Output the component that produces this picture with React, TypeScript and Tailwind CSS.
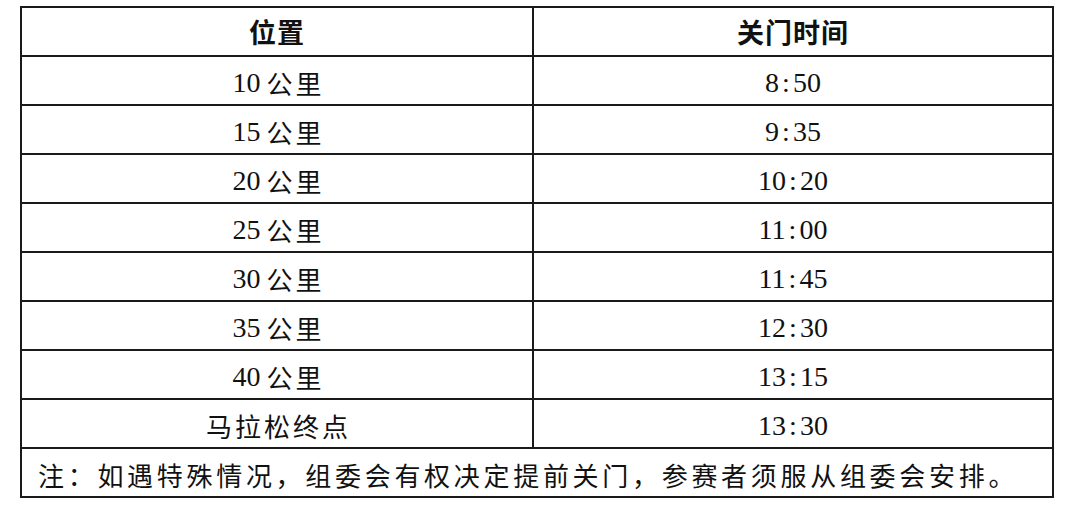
const rows = [
  { place: "10", time: "8:50" },
  { place: "15", time: "9:35" },
  { place: "20", time: "10:20" },
  { place: "25", time: "11:00" },
  { place: "30", time: "11:45" },
  { place: "35", time: "12:30" },
  { place: "40", time: "13:15" },
  { place: null, time: "13:30" },
];

const Time = ({ value }: { value: string }) => {
  const [h, m] = value.split(":");
  return (
    <span className="text-[28px] leading-none" style={{ fontFamily: '"Liberation Serif", serif' }}>
      {h}
      <span className="inline-block w-[14px] text-center">:</span>
      {m}
    </span>
  );
};

const Cjk = ({ children }: { children: React.ReactNode }) => (
  <span
    className="text-[26px] leading-none tracking-[3px] -mr-[3px]"
    style={{ fontFamily: '"Noto Sans CJK SC", sans-serif' }}
  >
    {children}
  </span>
);

export default function App() {
  return (
    <div className="min-h-[509px] w-[1080px] bg-white pt-[6px] pl-[20px] text-[#111]">
      <div className="w-[1034px] border-2 border-[#1a1a1a]">
        <div className="grid h-[47px] grid-cols-[510px_1fr]">
          <div className="flex items-center justify-center">
            <span
              className="text-[27px] font-bold leading-none tracking-[1px]"
              style={{ fontFamily: '"Noto Sans CJK SC", sans-serif' }}
            >
              位置
            </span>
          </div>
          <div className="flex items-center justify-center border-l-2 border-[#1a1a1a]">
            <span
              className="text-[27px] font-bold leading-none tracking-[1px]"
              style={{ fontFamily: '"Noto Sans CJK SC", sans-serif' }}
            >
              关门时间
            </span>
          </div>
        </div>

        {rows.map((r) => (
          <div key={r.time} className="grid h-[49px] grid-cols-[510px_1fr] border-t-2 border-[#1a1a1a]">
            <div className="flex items-center justify-center pt-[4px]">
              {r.place ? (
                <>
                  <span className="text-[28px] leading-none" style={{ fontFamily: '"Liberation Serif", serif' }}>
                    {r.place}
                  </span>
                  <span className="w-[6px]" />
                  <Cjk>公里</Cjk>
                </>
              ) : (
                <Cjk>马拉松终点</Cjk>
              )}
            </div>
            <div className="flex items-center justify-center border-l-2 border-[#1a1a1a] pt-[4px]">
              <Time value={r.time} />
            </div>
          </div>
        ))}

        <div className="flex h-[49px] items-center border-t-2 border-[#1a1a1a] pl-[16px] pt-[4px]">
          <span
            className="text-[26px] leading-none tracking-[3.7px]"
            style={{ fontFamily: '"Noto Sans CJK SC", sans-serif' }}
          >
            注：如遇特殊情况，组委会有权决定提前关门，参赛者须服从组委会安排。
          </span>
        </div>
      </div>
    </div>
  );
}
